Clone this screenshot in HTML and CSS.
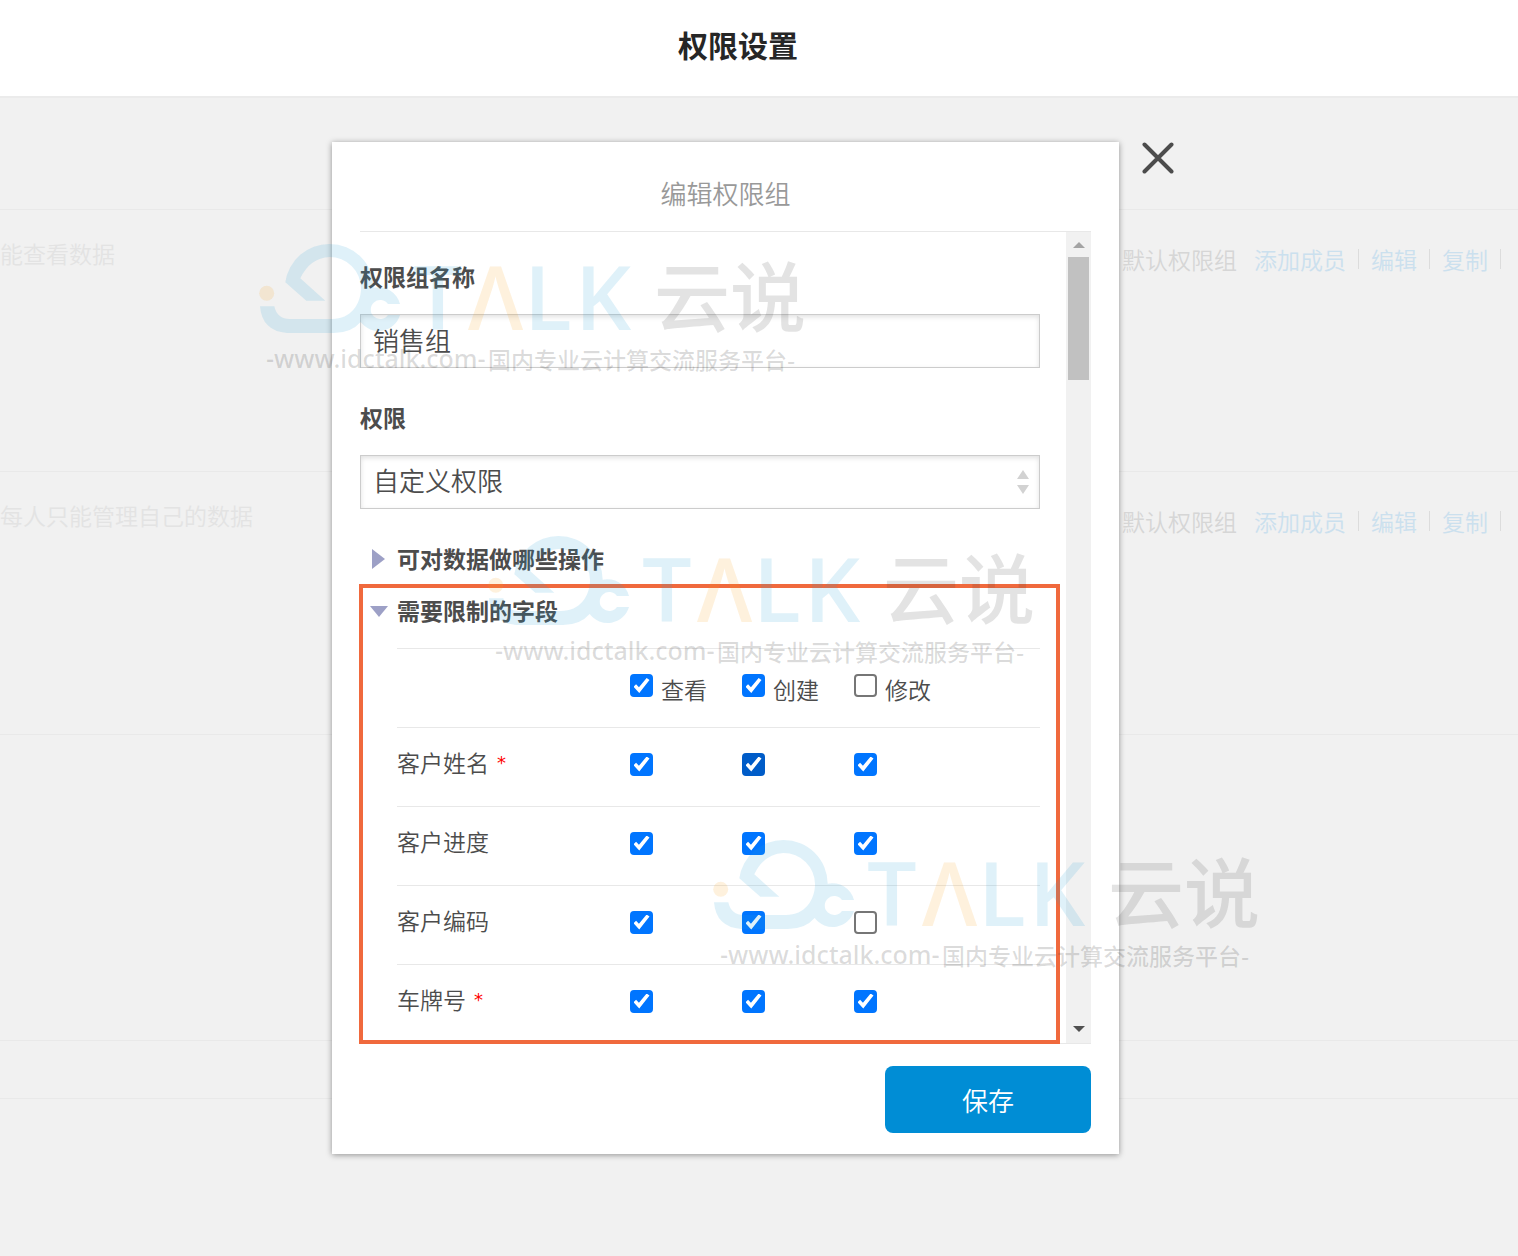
FILE: index.html
```html
<!DOCTYPE html>
<html lang="zh-CN">
<head>
<meta charset="utf-8">
<meta name="viewport" content="width=device-width, initial-scale=1">
<title>权限设置</title>
<link rel="stylesheet" href="styles.css">
</head>
<body>
<header class="topbar"><h1>权限设置</h1></header>

<main class="stage">
  <ul class="groups">
    <li class="group group-head"></li>
    <li class="group group-row">
      <span class="desc desc-cut">只能查看数据</span>
      <div class="actions"><span class="kind">默认权限组</span><a href="#">添加成员</a><i></i><a href="#">编辑</a><i></i><a href="#">复制</a><i></i></div>
    </li>
    <li class="group group-row">
      <span class="desc">每人只能管理自己的数据</span>
      <div class="actions"><span class="kind">默认权限组</span><a href="#">添加成员</a><i></i><a href="#">编辑</a><i></i><a href="#">复制</a><i></i></div>
    </li>
    <li class="group group-tall"></li>
    <li class="group group-short"></li>
  </ul>

  <div class="overlay">
    <form class="dialog" role="dialog" aria-labelledby="dialog-title">
      <button class="close" type="button" aria-label="关闭">
        <svg width="32" height="32" viewBox="0 0 32 32"><path d="M2.500 2.500 29.500 29.500M29.500 2.500 2.500 29.500" fill="none" stroke="#4c4c4c" stroke-width="4" stroke-linecap="round"/></svg>
      </button>
      <h2 id="dialog-title">编辑权限组</h2>
      <div class="scroller">
        <div class="content">
          <label class="field-label" for="name">权限组名称</label>
          <input class="control" id="name" type="text" value="销售组">
          <label class="field-label field-next" for="perm">权限</label>
          <div class="select-wrap">
            <select class="control" id="perm"><option>自定义权限</option></select>
            <svg class="updown" width="12" height="24" viewBox="0 0 12 24"><path d="M6 0 12 9H0zM0 15h12L6 24z" fill="#d2d2d2"/></svg>
          </div>
          <div class="toggles">
            <button class="toggle" type="button"><svg width="18" height="20" viewBox="0 0 18 20"><path d="M2 1v20L15 11z" fill="#9da0c6"/></svg>可对数据做哪些操作</button>
            <button class="toggle" type="button"><svg width="18" height="20" viewBox="0 0 18 20"><path d="M0 6h18L9 17z" fill="#9da0c6"/></svg>需要限制的字段</button>
          </div>
          <table class="fields">
            <colgroup><col class="col-name"><col class="col-check"><col class="col-check"><col></colgroup>
            <thead>
              <tr><td></td>
                <th><label><input type="checkbox" checked><span>查看</span></label></th>
                <th><label><input type="checkbox" checked><span>创建</span></label></th>
                <th><label><input type="checkbox"><span>修改</span></label></th></tr>
            </thead>
            <tbody>
              <tr><th>客户姓名<b>*</b></th>
                <td><input type="checkbox" aria-label="查看客户姓名" checked></td>
                <td><input type="checkbox" class="hovered" aria-label="创建客户姓名" checked></td>
                <td><input type="checkbox" aria-label="修改客户姓名" checked></td></tr>
              <tr><th>客户进度</th>
                <td><input type="checkbox" aria-label="查看客户进度" checked></td>
                <td><input type="checkbox" aria-label="创建客户进度" checked></td>
                <td><input type="checkbox" aria-label="修改客户进度" checked></td></tr>
              <tr><th>客户编码</th>
                <td><input type="checkbox" aria-label="查看客户编码" checked></td>
                <td><input type="checkbox" aria-label="创建客户编码" checked></td>
                <td><input type="checkbox" aria-label="修改客户编码"></td></tr>
              <tr><th>车牌号<b>*</b></th>
                <td><input type="checkbox" aria-label="查看车牌号" checked></td>
                <td><input type="checkbox" aria-label="创建车牌号" checked></td>
                <td><input type="checkbox" aria-label="修改车牌号" checked></td></tr>
            </tbody>
          </table>
        </div>
        <div class="scrollbar">
          <svg width="12" height="6" viewBox="0 0 12 6"><path d="M6 0 12 6H0z" fill="#a3a3a3"/></svg>
          <div class="thumb"></div>
          <svg width="12" height="6" viewBox="0 0 12 6"><path d="M0 0h12L6 6z" fill="#505050"/></svg>
        </div>
        <div class="highlight"></div>
      </div>
      <div class="footer"><button class="save" type="submit">保存</button></div>
    </form>
  </div>
</main>

<svg width="0" height="0" class="defs" aria-hidden="true">
  <symbol id="mark" viewBox="0 0 560 140" overflow="visible">
    <g class="wm-blue">
      <path d="M25.300 42.300A44.500 44.500 0 0 1 69.500 4A44 44 0 0 1 113.700 47.800A22.300 22.300 0 0 1 140 64H128A9.500 9.500 0 1 0 128 75H140A22.300 22.300 0 0 1 100.700 82Q91 93 74 93H27Q2 91 0 66.300H14.300Q17 79 30 79H72C91 79 101 64 101 48A31.500 31.500 0 0 0 69.500 17Q50 18 40.300 38.300L65.300 60.700H46.300Z"/>
      <text class="wm-latin" x="153" y="90">T</text>
      <text class="wm-latin" x="264" y="90">L</text>
      <text class="wm-latin" x="315" y="90">K</text>
    </g>
    <g class="wm-orange">
      <circle cx="6.700" cy="53.300" r="7.500"/>
      <text class="wm-latin" x="208" y="90">Λ</text>
    </g>
    <g class="wm-gray">
      <text class="wm-cn" x="394" y="86">云说</text>
      <text class="wm-url" x="6" y="128">-www.idctalk.com-</text>
      <text class="wm-tag" x="228" y="129">国内专业云计算交流服务平台-</text>
    </g>
  </symbol>
</svg>
<svg class="watermark wm-1" aria-hidden="true"><use href="#mark"/></svg>
<svg class="watermark wm-2" aria-hidden="true"><use href="#mark"/></svg>
<svg class="watermark wm-3" aria-hidden="true"><use href="#mark"/></svg>
</body>
</html>
```
FILE: styles.css
```css
* { box-sizing: border-box; }
body {
  margin: 0;
  min-height: 100vh;
  position: relative;
  display: flex;
  flex-direction: column;
  background: #f1f1f1;
  color: #4c4c4c;
  font: 350 23px/30px "Noto Sans CJK SC DemiLight", "Noto Sans CJK SC", sans-serif;
  overflow-x: hidden;
}
button, input, select { font: inherit; color: inherit; }
h1, h2 { margin: 0; }

.topbar {
  height: 98px;
  padding-right: 42px;
  background: #fff;
  border-bottom: 2px solid #ebebeb;
  text-align: center;
}
.topbar h1 { font-family: "Noto Sans CJK SC", sans-serif; font-size: 30px; font-weight: 700; line-height: 88px; color: #262626; }

.stage { position: relative; flex: 1; }
.groups { list-style: none; margin: 0; padding: 0; }
.group { border-bottom: 1px solid #e9e9e9; }
.group-head { height: 112px; }
.group-row { height: 262px; display: flex; justify-content: space-between; padding: 28px 17px 0 0; overflow: hidden; }
.group-row + .group-row { height: 263px; }
.group-tall { height: 306px; }
.group-short { height: 58px; }
.desc { color: #e3e3e3; white-space: nowrap; }
.desc-cut { margin-left: -23px; }
.actions { display: flex; align-items: center; gap: 12px; height: 30px; margin-top: 6px; color: #d6d6d6; white-space: nowrap; }
.actions a { color: #cbe0ee; text-decoration: none; }
.actions i { width: 1px; height: 20px; background: #dcdcdc; }
.kind { margin-right: 5px; }

.overlay { position: absolute; inset: 0; display: flex; justify-content: center; align-items: flex-start; padding: 44px 67px 44px 0; }
.dialog { position: relative; width: 787px; padding: 0 28px; background: #fff; box-shadow: 0 1px 6px rgba(0, 0, 0, .4); }
.dialog h2 { padding: 29px 0 16px; font-size: 26px; font-weight: 350; line-height: 44px; color: #999; text-align: center; }
.close { position: absolute; left: 100%; top: 0; margin-left: 23px; padding: 0; border: 0; background: none; }
.close svg { display: block; }

.scroller { position: relative; display: flex; border-top: 1px solid #e8e8e8; border-bottom: 1px solid #e8e8e8; }
.content { flex: 1; padding: 29px 26px 0 0; }
.field-label { display: block; margin-bottom: 23px; font-family: "Noto Sans CJK SC", sans-serif; font-weight: 700; }
.field-next { margin-top: 34px; }
.control {
  display: block;
  width: 100%;
  height: 54px;
  padding: 0 12px 4px;
  border: 1px solid #ccc;
  border-radius: 0;
  background: #fff;
  box-shadow: inset 0 2px 5px rgba(0, 0, 0, .12);
  font-size: 26px;
  appearance: none;
  outline: none;
}
.select-wrap { position: relative; }
.updown { position: absolute; right: 11px; top: 15px; }

.toggles { margin: 24px 0 11px; }
.toggle { display: flex; align-items: center; gap: 9px; width: 100%; height: 52px; padding: 0 10px 2px; border: 0; background: none; font-family: "Noto Sans CJK SC", sans-serif; font-weight: 700; }
.toggle svg { overflow: visible; }

.fields { width: calc(100% - 37px); margin-left: 37px; table-layout: fixed; border-collapse: separate; border-spacing: 0; }
.col-name { width: 233px; }
.col-check { width: 112px; }
.fields th, .fields td { height: 79px; padding: 0 0 6px; border-top: 1px solid #e8e8e8; text-align: left; font-weight: 350; }
.fields tbody th { padding-bottom: 10px; }
.fields thead th { padding: 2px 0 0; }
.fields label { display: flex; gap: 8px; }
.fields input {
  display: flex;
  align-items: center;
  justify-content: center;
  width: 23px;
  height: 23px;
  margin: 0;
  border: 2px solid #767676;
  border-radius: 4px;
  background: #fff;
  appearance: none;
}
.fields input:checked { border-color: #0075ff; background: #0075ff; }
.fields input:checked::before {
  content: "";
  width: 16px;
  height: 15px;
  background: #fff;
  clip-path: polygon(0 58%, 16% 42%, 34% 62%, 82% 0, 100% 14%, 36% 100%);
}
.fields .hovered:checked { border-color: #005cc8; background: #005cc8; }
.fields b { margin-left: 8px; font: 400 18px/18px "DejaVu Sans", sans-serif; vertical-align: 3px; color: #f00; }

.scrollbar { display: flex; flex-direction: column; align-items: center; width: 25px; padding: 10px 0 11px; background: #f1f1f1; }
.thumb { width: 21px; height: 123px; margin: 9px 0 auto; background: #c1c1c1; }
.highlight { position: absolute; left: -1px; right: 31px; top: 352px; bottom: -1px; border: 4px solid #f0693d; pointer-events: none; }

.footer { display: flex; justify-content: flex-end; padding: 22px 0 21px; }
.save { width: 206px; height: 67px; border: 0; border-radius: 8px; background: #008dd5; color: #fff; font-size: 26px; }

.defs { position: absolute; }
.watermark { position: absolute; width: 560px; height: 140px; overflow: visible; pointer-events: none; }
.wm-1 { left: 260px; top: 240px; }
.wm-2 { left: 489px; top: 532px; }
.wm-3 { left: 714px; top: 836px; }
.wm-blue { fill: #28a0d7; fill-opacity: .15; }
.wm-orange { fill: #f5a01e; fill-opacity: .15; }
.wm-gray { fill: #414141; fill-opacity: .15; }
.wm-latin { font: 600 88px "Open Sans", sans-serif; }
.wm-cn { font: 500 76px "Noto Sans CJK SC", sans-serif; }
.wm-url { font: 500 25px "Noto Sans", sans-serif; fill-opacity: .19; }
.wm-tag { font: 500 23px "Noto Sans CJK SC", sans-serif; fill-opacity: .19; }
```
